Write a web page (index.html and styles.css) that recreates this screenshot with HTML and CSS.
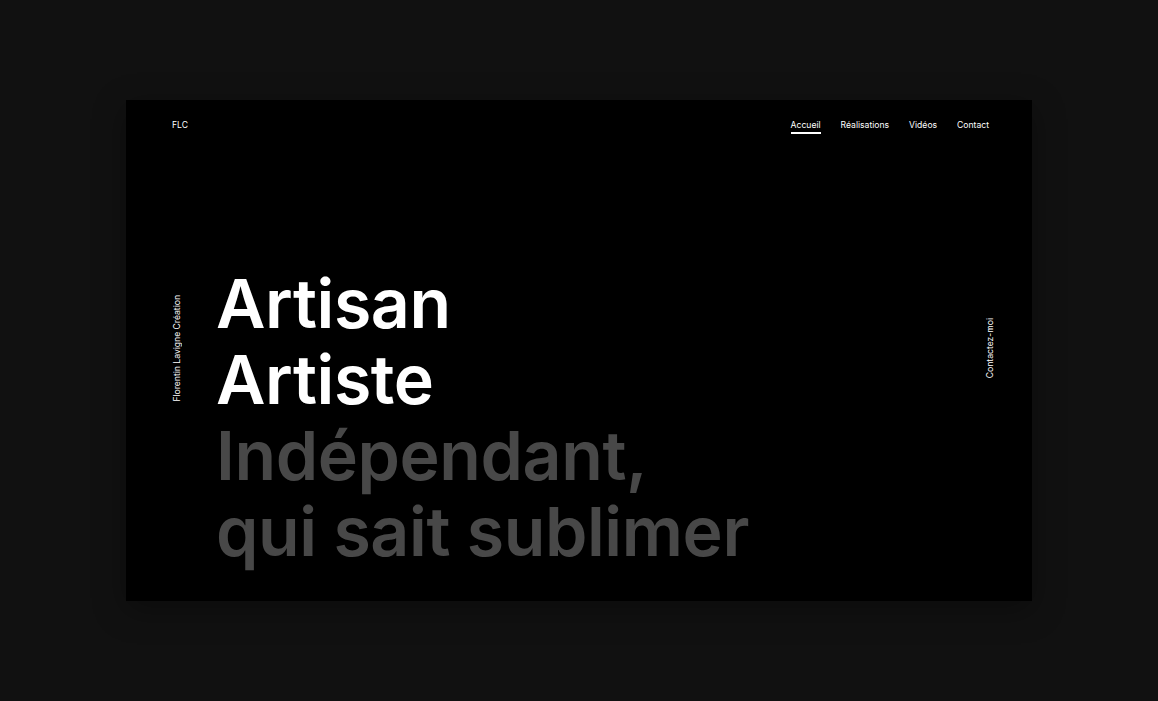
FILE: index.html
```html
<!DOCTYPE html>
<html lang="fr">

<head>
    <meta charset="UTF-8">
    <meta name="viewport" content="width=device-width, initial-scale=1.0">
    <title>FLC - Florentin Lavigne Création</title>
    <link rel="stylesheet" href="styles.css">
</head>

<body>
    <div class="frame">
        <header class="topbar">
            <a class="logo" href="#">FLC</a>
            <nav class="menu">
                <a class="menu-link active" href="#">Accueil</a>
                <a class="menu-link" href="#">Réalisations</a>
                <a class="menu-link" href="#">Vidéos</a>
                <a class="menu-link" href="#">Contact</a>
            </nav>
        </header>

        <main class="hero">
            <div class="side">
                <span class="side-text">Florentin Lavigne Création</span>
            </div>
            <h1 class="hero-title">
                <span class="line">Artisan</span>
                <span class="line">Artiste</span>
                <span class="line muted">Indépendant,</span>
                <span class="line muted">qui sait sublimer</span>
            </h1>
            <div class="side side-right">
                <a class="side-text" href="#">Contactez-moi</a>
            </div>
        </main>
    </div>
</body>

</html>
```

FILE: styles.css
```css
body {
    margin: 0;
    min-height: 100vh;
    background-color: #111111;
    display: flex;
    align-items: center;
    justify-content: center;
    font-family: 'Inter', 'Open Sans', sans-serif;
    color: white;
}
a {
    color: white;
    text-decoration: none;
}
.frame {
    width: 906px;
    height: 501px;
    background-color: #000;
    box-shadow: 0 8px 30px rgba(0, 0, 0, 0.35);
    display: flex;
    flex-direction: column;
    padding: 0 43px 0 46px;
    box-sizing: border-box;
}
.topbar {
    flex-shrink: 0;
    height: 49px;
    display: flex;
    align-items: center;
    justify-content: space-between;
    font-size: 8.6px;
    font-weight: 400;
}
.menu {
    display: flex;
    gap: 20px;
}
.menu-link {
    position: relative;
}
.menu-link.active::after {
    content: "";
    position: absolute;
    left: 0;
    right: 0;
    bottom: -4px;
    height: 1.5px;
    background-color: white;
}
.hero {
    flex: 1;
    min-height: 0;
    display: flex;
    align-items: flex-start;
    padding-bottom: 53px;
}
.side {
    align-self: stretch;
    display: flex;
    align-items: center;
}
.side-right {
    margin-right: -6px;
}
.side-text {
    writing-mode: vertical-rl;
    transform: rotate(180deg);
    font-size: 8.6px;
    font-weight: 400;
    white-space: nowrap;
}
.hero-title {
    flex: 1;
    margin: 116px 0 0 34px;
    font-size: 68px;
    line-height: 76px;
    font-weight: 600;
    letter-spacing: -0.4px;
}
.line {
    display: block;
}
.muted {
    color: #484848;
}
```
